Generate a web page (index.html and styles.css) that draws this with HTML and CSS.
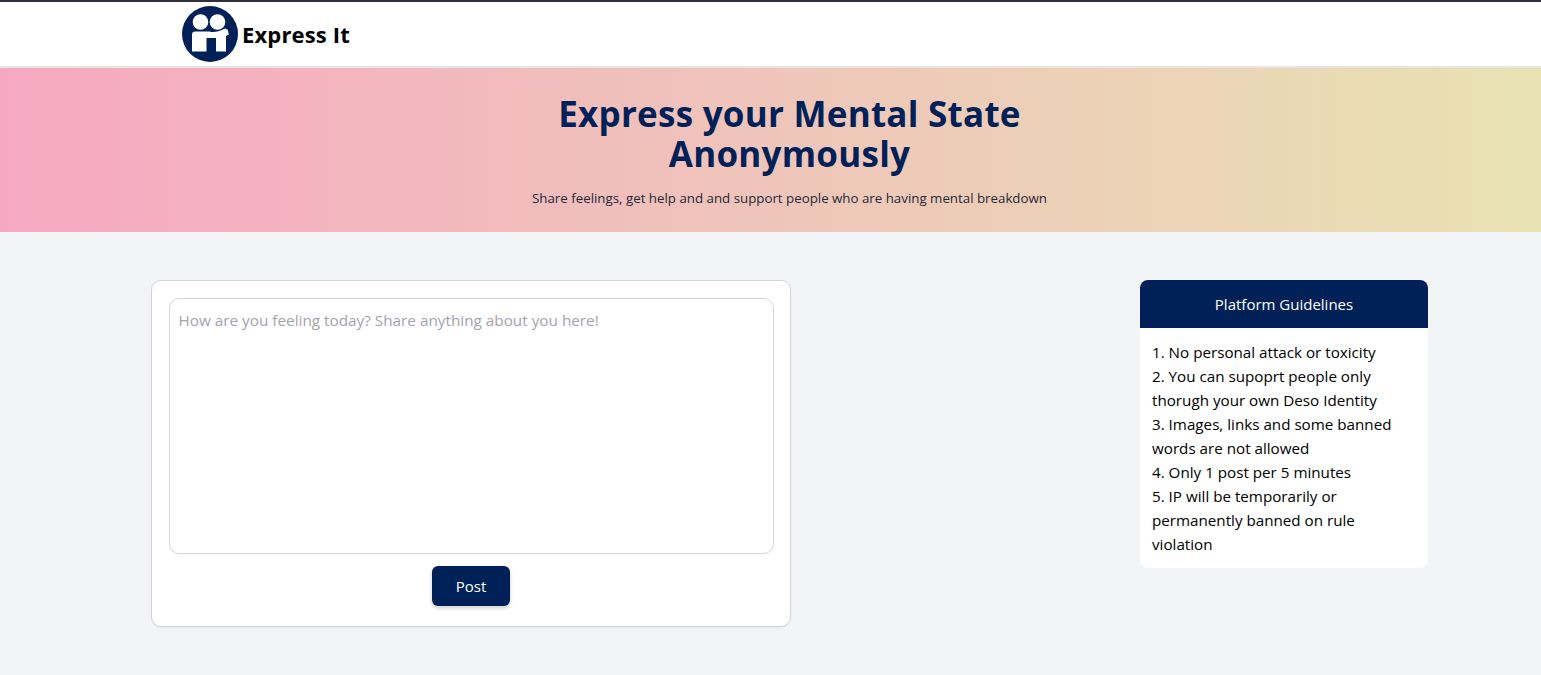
FILE: index.html
```html
<!DOCTYPE html>
<html lang="en">
<head>
<meta charset="utf-8">
<title>Express It</title>
<link rel="stylesheet" href="styles.css">
</head>
<body>
<header class="nav">
  <svg class="logo" viewBox="0 0 58 58" aria-hidden="true">
    <circle cx="29" cy="29" r="28" fill="#002157"/>
    <circle cx="19.500" cy="17" r="7.800" fill="#fff"/>
    <circle cx="36.500" cy="17" r="7.800" fill="#fff"/>
    <path d="M14 26.500H27c2 0 3 .6 4.500.6 4.500 0 9-1.800 12.500-3.500l2.800 1.200 1 4.800-2.800 1.500V46.500H35V33H25.500V46.500H11V29.500c0-1.800 1.200-3 3-3z" fill="#fff"/>
  </svg>
  <span class="brand">Express It</span>
</header>
<section class="hero">
  <h1 class="hero-title">Express your Mental State<br>Anonymously</h1>
  <p class="hero-sub">Share feelings, get help and and support people who are having mental breakdown</p>
</section>
<main class="content">
  <form class="post-card">
    <textarea class="post-input" placeholder="How are you feeling today? Share anything about you here!"></textarea>
    <button class="post-btn" type="button">Post</button>
  </form>
  <aside class="rules">
    <h2 class="rules-head">Platform Guidelines</h2>
    <div class="rules-body">
      <div>1. No personal attack or toxicity</div>
      <div>2. You can supoprt people only thorugh your own Deso Identity</div>
      <div>3. Images, links and some banned words are not allowed</div>
      <div>4. Only 1 post per 5 minutes</div>
      <div>5. IP will be temporarily or permanently banned on rule violation</div>
    </div>
  </aside>
</main>
</body>
</html>
```
FILE: styles.css
```css
* { box-sizing: border-box; }
html, body { margin: 0; height: 100%; }
body {
  background: #f3f4f6;
  font-family: "Open Sans", "Noto Sans", sans-serif;
  color: #000;
  overflow: hidden;
}
.nav {
  height: 68px;
  background: #fff;
  border-top: 2px solid #2f2f3d;
  border-bottom: 2px solid #e5e5e5;
  display: flex;
  align-items: center;
  padding-left: 181px;
  gap: 3px;
}
.logo { width: 58px; height: 58px; display: block; flex: none; }
.brand { font-size: 22px; font-weight: 700; letter-spacing: 0.15px; }
.hero {
  height: 164px;
  background: linear-gradient(90deg, #f6a8c2 0%, #e8e2b2 100%);
  display: flex;
  flex-direction: column;
  align-items: center;
  padding: 26px 0 0 38px;
}
.hero-title {
  margin: 0;
  font-size: 35px;
  line-height: 40px;
  font-weight: 700;
  letter-spacing: 0.25px;
  color: #002157;
  text-align: center;
}
.hero-sub {
  margin: 14px 0 0;
  font-size: 13.3px;
  line-height: 20px;
  color: #1f2937;
}
.content {
  display: flex;
  justify-content: space-between;
  align-items: flex-start;
  padding: 48px 113px 0 151px;
}
.post-card {
  width: 640px;
  height: 347px;
  background: #fff;
  border: 1px solid #d4d4d4;
  border-radius: 10px;
  padding: 17px;
  display: flex;
  flex-direction: column;
  align-items: center;
  box-shadow: 0 1px 2px rgba(0,0,0,.05);
}
.post-input {
  width: 605px;
  height: 256px;
  flex: none;
  border: 1px solid #d1d5db;
  border-radius: 10px;
  padding: 9px 9px;
  font: inherit;
  font-size: 15.3px;
  line-height: 24px;
  resize: none;
  outline: none;
  background: #fff;
}
.post-input::placeholder { color: #a3a3ad; opacity: 1; }
.post-btn {
  margin-top: 12px;
  width: 78px;
  height: 40px;
  border: 0;
  border-radius: 6px;
  background: #002157;
  color: #fff;
  font: inherit;
  font-size: 15px;
  box-shadow: 0 2px 4px rgba(0,0,0,.2);
}
.rules {
  width: 288px;
  background: #fff;
  border-radius: 8px;
  overflow: hidden;
}
.rules-head {
  margin: 0;
  height: 48px;
  background: #002157;
  color: #fff;
  font-size: 15px;
  font-weight: 400;
  display: flex;
  align-items: center;
  justify-content: center;
}
.rules-body {
  padding: 12px;
  font-size: 15.2px;
  line-height: 24px;
  color: #000;
}
```
